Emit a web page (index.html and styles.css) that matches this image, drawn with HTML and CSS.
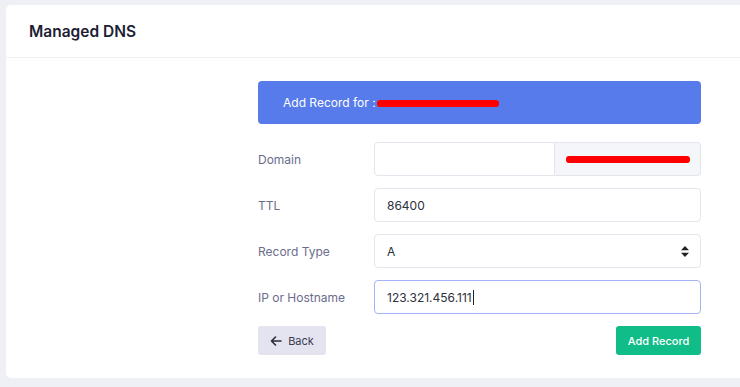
FILE: index.html
```html
<!DOCTYPE html>
<html lang="en">
<head>
    <meta charset="UTF-8">
    <meta name="viewport" content="width=device-width, initial-scale=1.0">
    <title>Managed DNS</title>
    <link rel="stylesheet" href="styles.css">
</head>
<body>
    <div class="card">
        <div class="card-header">
            <h2>Managed DNS</h2>
        </div>
        <div class="card-body">
            <form class="record-form" onsubmit="event.preventDefault()">
                <div class="alert">Add Record for : <span class="redact redact-title"></span></div>

                <div class="form-row">
                    <label for="domain">Domain</label>
                    <div class="input-group">
                        <input type="text" id="domain">
                        <span class="addon"><span class="redact redact-addon"></span></span>
                    </div>
                </div>
                <div class="form-row">
                    <label for="ttl">TTL</label>
                    <input type="text" id="ttl" value="86400">
                </div>
                <div class="form-row">
                    <label for="type">Record Type</label>
                    <div class="select">
                        <span>A</span>
                        <svg width="8" height="11" viewBox="0 0 8 11"><path d="M4 0 L8 4.2 H0 Z M0 6.8 H8 L4 11 Z" fill="#222"/></svg>
                    </div>
                </div>
                <div class="form-row">
                    <label for="ip">IP or Hostname</label>
                    <div class="input focused">123.321.456.111<span class="caret"></span></div>
                </div>

                <div class="actions">
                    <button type="button" class="btn-back">
                        <svg width="12" height="10" viewBox="0 0 12 10"><path d="M11 5 H1.5 M5.5 1 L1.5 5 L5.5 9" stroke="#2a2d3a" stroke-width="1.6" fill="none" stroke-linecap="round" stroke-linejoin="round"/></svg>
                        Back
                    </button>
                    <button type="submit" class="btn-add">Add Record</button>
                </div>
            </form>
        </div>
    </div>
</body>
</html>
```

FILE: styles.css
```css
* {
    margin: 0;
    padding: 0;
    box-sizing: border-box;
}

body {
    background-color: #eff0f5;
    font-family: Inter, "Open Sans", sans-serif;
    padding: 5px 0 0 6px;
    overflow: hidden;
}

.card {
    background-color: white;
    border-radius: 5px 0 0 5px;
    height: 373px;
}

.card-header {
    height: 53px;
    border-bottom: 1px solid #f1f2f5;
    padding: 17px 23px 0;
}

.card-header h2 {
    font-size: 15.5px;
    font-weight: 600;
    color: #1d2033;
}

.card-body {
    padding: 23px 0 0 252px;
}

.record-form {
    width: 443px;
}

.alert {
    background-color: #577bea;
    color: white;
    height: 43px;
    border-radius: 4px;
    padding: 0 25px;
    display: flex;
    align-items: center;
    font-size: 12px;
    margin-bottom: 18px;
}

.redact {
    display: inline-block;
    background-color: #ff0000;
    border-radius: 3px;
    height: 7px;
}

.redact-title {
    width: 122px;
    margin-left: 1px;
    margin-top: 1px;
}

.redact-addon {
    width: 124px;
}

.form-row {
    display: flex;
    align-items: center;
    margin-bottom: 12px;
}

.form-row label {
    width: 116px;
    flex-shrink: 0;
    font-size: 12px;
    color: #6a6d8c;
}

.form-row input,
.input,
.select {
    flex: 1;
    min-width: 0;
    height: 34px;
    border: 1px solid #e4e5ed;
    border-radius: 4px;
    padding: 0 12px;
    font-family: inherit;
    font-size: 12px;
    color: #2c2f3c;
    display: flex;
    align-items: center;
    outline: none;
}

.input-group {
    flex: 1;
    min-width: 0;
    display: flex;
}

.input-group input {
    width: 0;
    border-radius: 4px 0 0 4px;
}

.addon {
    width: 146px;
    flex-shrink: 0;
    height: 34px;
    border: 1px solid #e4e5ed;
    border-left: none;
    border-radius: 0 4px 4px 0;
    background-color: #f5f6f9;
    display: flex;
    align-items: center;
    padding-left: 11px;
}

.select {
    justify-content: space-between;
    padding-right: 11px;
}

.focused {
    border-color: #a4b3f5;
}

.caret {
    display: inline-block;
    width: 1px;
    height: 15px;
    background-color: #222;
    margin-left: 1px;
}

.actions {
    display: flex;
    justify-content: space-between;
}

.actions button {
    height: 29px;
    border: none;
    border-radius: 3px;
    font-family: inherit;
    font-size: 11px;
    white-space: nowrap;
    cursor: pointer;
    display: flex;
    align-items: center;
    justify-content: center;
}

.btn-back {
    background-color: #e4e3f0;
    color: #3a3c4f;
    gap: 6px;
    width: 68px;
}

.btn-add {
    background-color: #10bc87;
    color: white;
    font-weight: 500;
    width: 85px;
}
```
